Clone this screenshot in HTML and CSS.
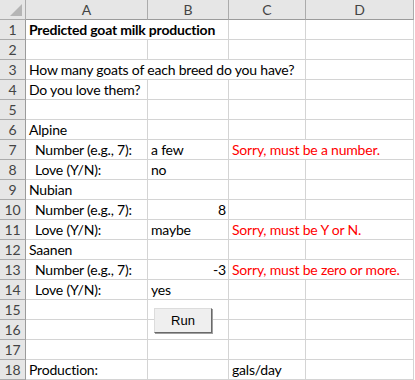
FILE: index.html
```html
<!DOCTYPE html>
<html lang="en">
<head>
    <meta charset="UTF-8">
    <title>Goat milk</title>
    <link rel="stylesheet" href="styles.css">
</head>
<body>
    <div class="sheet">
        <div class="corner"><span class="tri"></span></div>
        <div class="colhead">A</div>
        <div class="colhead">B</div>
        <div class="colhead">C</div>
        <div class="colhead">D</div>

        <div class="rowhead">1</div>
        <div class="cell span2 bold">Predicted goat milk production</div>
        <div class="cell"></div>
        <div class="cell"></div>

        <div class="rowhead">2</div>
        <div class="cell"></div><div class="cell"></div><div class="cell"></div><div class="cell"></div>

        <div class="rowhead">3</div>
        <div class="cell span3">How many goats of each breed do you have?</div>
        <div class="cell"></div>

        <div class="rowhead">4</div>
        <div class="cell">Do you love them?</div><div class="cell"></div><div class="cell"></div><div class="cell"></div>

        <div class="rowhead">5</div>
        <div class="cell"></div><div class="cell"></div><div class="cell"></div><div class="cell"></div>

        <div class="rowhead">6</div>
        <div class="cell">Alpine</div><div class="cell"></div><div class="cell"></div><div class="cell"></div>

        <div class="rowhead">7</div>
        <div class="cell indent">Number (e.g., 7):</div>
        <div class="cell">a few</div>
        <div class="cell span2 error">Sorry, must be a number.</div>

        <div class="rowhead">8</div>
        <div class="cell indent">Love (Y/N):</div>
        <div class="cell">no</div><div class="cell"></div><div class="cell"></div>

        <div class="rowhead">9</div>
        <div class="cell">Nubian</div><div class="cell"></div><div class="cell"></div><div class="cell"></div>

        <div class="rowhead">10</div>
        <div class="cell indent">Number (e.g., 7):</div>
        <div class="cell num">8</div><div class="cell"></div><div class="cell"></div>

        <div class="rowhead">11</div>
        <div class="cell indent">Love (Y/N):</div>
        <div class="cell">maybe</div>
        <div class="cell span2 error">Sorry, must be Y or N.</div>

        <div class="rowhead">12</div>
        <div class="cell">Saanen</div><div class="cell"></div><div class="cell"></div><div class="cell"></div>

        <div class="rowhead">13</div>
        <div class="cell indent">Number (e.g., 7):</div>
        <div class="cell num">-3</div>
        <div class="cell span2 error">Sorry, must be zero or more.</div>

        <div class="rowhead">14</div>
        <div class="cell indent">Love (Y/N):</div>
        <div class="cell">yes</div><div class="cell"></div><div class="cell"></div>

        <div class="rowhead">15</div>
        <div class="cell"></div><div class="cell"></div><div class="cell"></div><div class="cell"></div>

        <div class="rowhead">16</div>
        <div class="cell"></div><div class="cell"></div><div class="cell"></div><div class="cell"></div>

        <div class="rowhead">17</div>
        <div class="cell"></div><div class="cell"></div><div class="cell"></div><div class="cell"></div>

        <div class="rowhead">18</div>
        <div class="cell">Production:</div><div class="cell"></div>
        <div class="cell">gals/day</div><div class="cell"></div>

        <button class="run-btn">Run</button>
    </div>
</body>
</html>
```

FILE: styles.css
```css
* {
    margin: 0;
    padding: 0;
    box-sizing: border-box;
}

body {
    font-family: Lato, 'Open Sans', sans-serif;
    font-size: 14px;
    letter-spacing: -0.2px;
    color: #000;
    background: #fff;
    overflow: hidden;
}

.sheet {
    position: relative;
    display: grid;
    grid-template-columns: 26px 122px 81px 77px 108px;
    grid-auto-rows: 20px;
    width: 414px;
}

.corner,
.colhead,
.rowhead {
    background: #e6e6e6;
    color: #444;
    letter-spacing: 0;
}

.corner {
    position: relative;
    border-right: 1px solid #ababab;
    border-bottom: 1px solid #ababab;
}

.tri {
    position: absolute;
    right: 3px;
    bottom: 3px;
    width: 0;
    height: 0;
    border-left: 12px solid transparent;
    border-bottom: 12px solid #b5b5b5;
}

.colhead {
    display: flex;
    align-items: center;
    justify-content: center;
    border-right: 1px solid #ababab;
    border-bottom: 1px solid #9b9b9b;
    font-size: 14px;
}

.rowhead {
    display: flex;
    align-items: center;
    justify-content: center;
    border-right: 1px solid #9b9b9b;
    border-bottom: 1px solid #ababab;
    font-size: 14px;
}

.cell {
    border-right: 1px solid #d4d4d4;
    border-bottom: 1px solid #d4d4d4;
    padding: 0 3px;
    line-height: 19px;
    white-space: nowrap;
    overflow: visible;
}

.span2 { grid-column: span 2; }
.span3 { grid-column: span 3; }

.bold { font-weight: bold; }

.indent { padding-left: 9px; }

.num { text-align: right; padding-right: 2px; }

.error { color: #ff0000; }

.run-btn {
    position: absolute;
    left: 154px;
    top: 308px;
    width: 58px;
    height: 25px;
    background: #efefef;
    border: 1px solid #dcdcdc;
    border-right-color: #696969;
    border-bottom-color: #696969;
    box-shadow: 1px 1px 0 #a0a0a0;
    font-family: 'Liberation Sans', Arial, sans-serif;
    font-size: 13px;
    color: #000;
}
```
